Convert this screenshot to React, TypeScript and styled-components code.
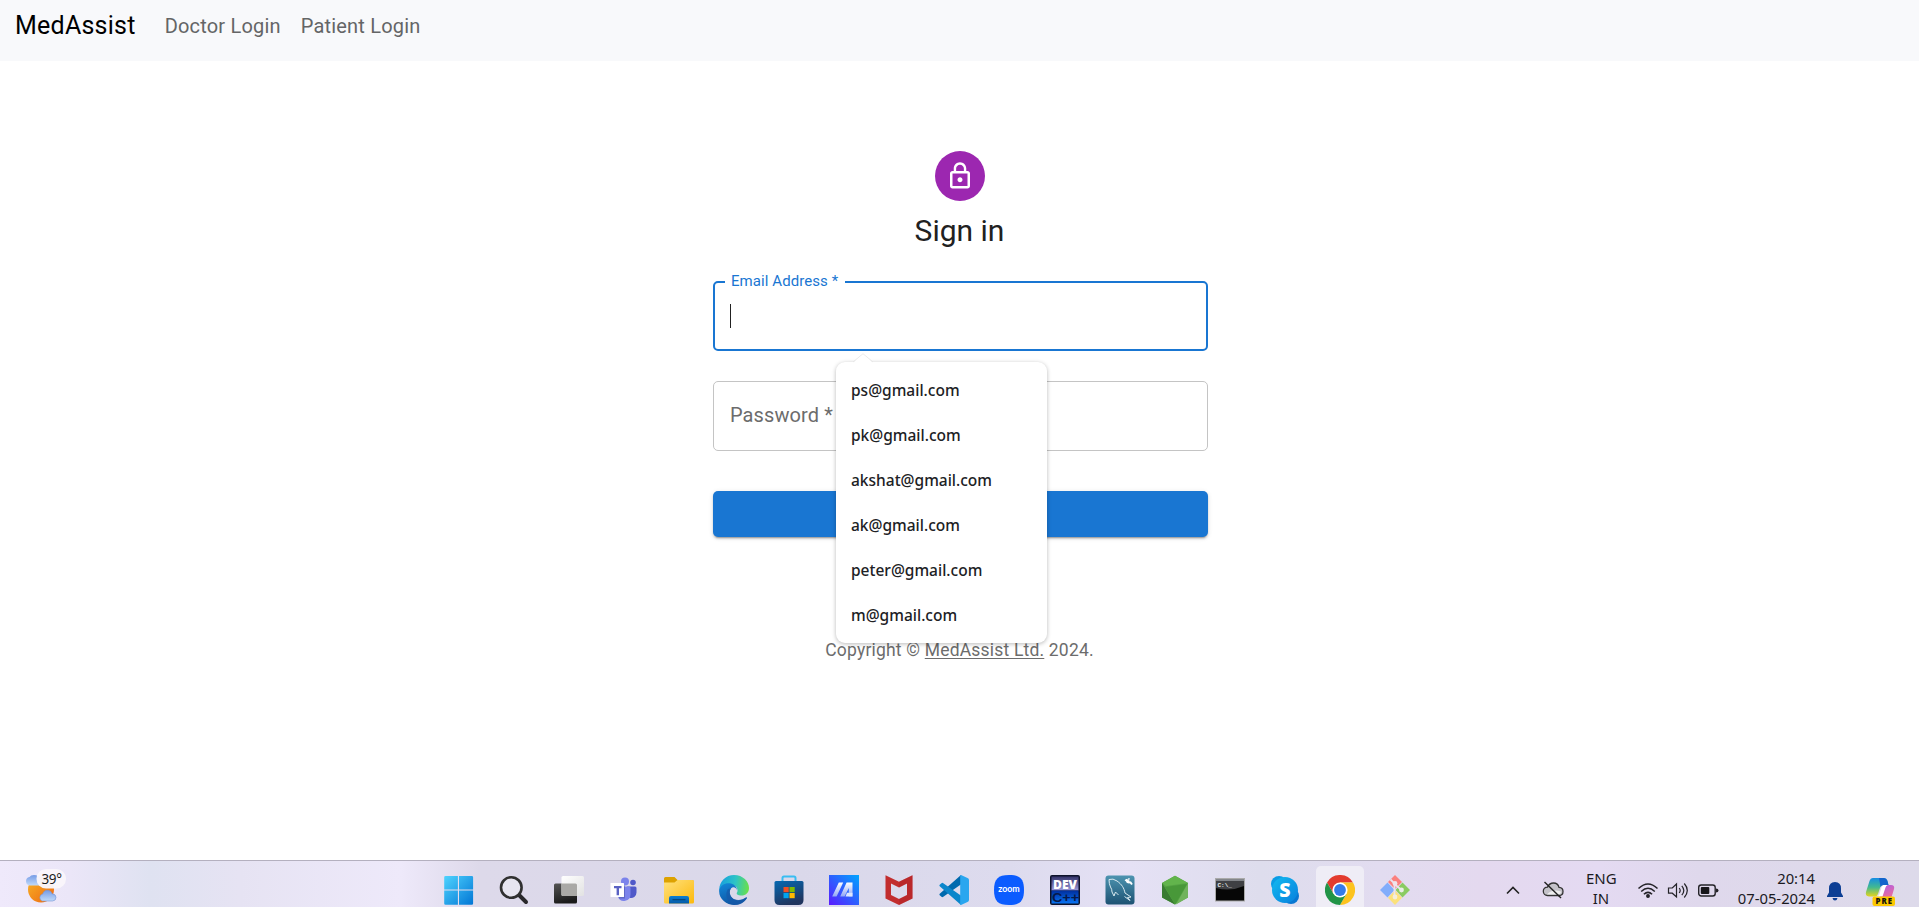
import React from "react";
import styled, { createGlobalStyle } from "styled-components";

const GlobalStyle = createGlobalStyle`
  *, *::before, *::after { box-sizing: border-box; }
  html, body { margin: 0; padding: 0; overflow: hidden; background: #fff; }
  body { font-family: Roboto, "Liberation Sans", sans-serif; }
`;

const Page = styled.div`
  display: flex;
  flex-direction: column;
  width: 100vw;
  height: 100vh;
  background: #fff;
`;

const Navbar = styled.nav`
  display: flex;
  align-items: flex-start;
  height: 61px;
  flex: none;
  padding: 7px 15px 0;
  background: #f8f9fb;
`;

const Brand = styled.a`
  font-size: 25px;
  line-height: 37px;
  letter-spacing: 0.24px;
  color: #000;
  margin-right: 29px;
`;

const NavItem = styled.a`
  font-size: 20px;
  line-height: 38px;
  letter-spacing: 0.19px;
  color: #646566;
  margin-right: 20px;
`;

const Main = styled.main`
  display: flex;
  flex-direction: column;
  align-items: center;
  flex: 1;
  min-height: 0;
  padding-top: 90px;
`;

const Avatar = styled.div`
  display: flex;
  align-items: center;
  justify-content: center;
  width: 50px;
  height: 50px;
  border-radius: 50%;
  background: #9c27b0;
`;

const Title = styled.h1`
  margin: 10px 0 0;
  font-size: 30px;
  font-weight: 400;
  line-height: 40px;
  color: #212121;
`;

const Form = styled.form`
  display: flex;
  flex-direction: column;
  width: 495px;
  margin: 30px 0 0 2px;
`;

const Field = styled.div<{ $active?: boolean }>`
  position: relative;
  display: flex;
  align-items: center;
  height: 70px;
  padding: ${(p) => (p.$active ? "0 15px" : "0 16px 2px")};
  margin-bottom: 30px;
  border: ${(p) => (p.$active ? "2px solid #1976d2" : "1px solid #c4c4c4")};
  border-radius: 5px;
`;

const FloatingLabel = styled.label`
  position: absolute;
  left: 10px;
  top: -12px;
  padding: 0 7px 0 6px;
  background: #fff;
  font-size: 15px;
  line-height: 20px;
  letter-spacing: 0.07px;
  color: #1976d2;
`;

const Placeholder = styled.label`
  font-size: 20px;
  letter-spacing: 0.1px;
  color: #6c6c6c;
`;

const Caret = styled.span`
  width: 1px;
  height: 24px;
  background: #212121;
`;

const SubmitButton = styled.button`
  height: 46px;
  margin: 10px 0 0;
  border: 0;
  border-radius: 5px;
  background: #1976d2;
  box-shadow: 0 3px 1px -2px rgba(0, 0, 0, 0.2), 0 2px 2px rgba(0, 0, 0, 0.14),
    0 1px 5px rgba(0, 0, 0, 0.12);
`;

const Suggestions = styled.div`
  position: absolute;
  z-index: 2;
  left: 121px;
  top: 79px;
  width: 211px;
  height: 281px;
  padding-top: 5px;
  border-radius: 9px;
  background: #fff;
  box-shadow: 0 1px 4px rgba(0, 0, 0, 0.28);
`;

const Pointer = styled.svg`
  position: absolute;
  left: 17px;
  top: -9px;
`;

const Suggestion = styled.div`
  display: flex;
  align-items: center;
  height: 45px;
  padding: 0 15px;
  font-family: "Noto Sans", "Open Sans", sans-serif;
  font-size: 15.5px;
  font-weight: 500;
  color: #202124;
`;

const Copyright = styled.p`
  margin: 101px 0 0;
  font-size: 17.5px;
  line-height: 25px;
  letter-spacing: 0.19px;
  color: #6c6c6c;

  a {
    text-decoration: underline;
    text-underline-offset: 2px;
    text-decoration-thickness: 1px;
  }
`;

const Taskbar = styled.footer`
  display: flex;
  height: 47px;
  flex: none;
  border-top: 1px solid #b4b0bf;
  overflow: hidden;
  background: linear-gradient(
    90deg,
    #efe9fb 0,
    #ebe6f8 70px,
    #dfe2f1 150px,
    #e6e3f3 240px,
    #eee9fa 400px,
    #ddd9ea 480px,
    #dad8ea 800px,
    #dddbee 1010px,
    #e5e1f5 1130px,
    #dedded 1260px,
    #e2dcf0 1380px,
    #e4d9ef 1480px,
    #e4daf2 1600px,
    #dfd8ec 1700px,
    #dddaea 1919px
  );
`;

const Weather = styled.div`
  display: flex;
  width: 430px;
  padding: 7px 0 0 25px;
`;

const Apps = styled.div`
  display: flex;
  width: 990px;
`;

const AppCell = styled.div<{ $active?: boolean }>`
  display: flex;
  justify-content: center;
  width: 48px;
  height: 50px;
  margin: 5px 2.6px 0 4.5px;
  padding-top: 9px;
  border-radius: 5px;
  flex: none;
  background: ${(p) => (p.$active ? "#efedf6" : "transparent")};
`;

const Tray = styled.div`
  display: flex;
  flex: 1;
  align-items: flex-start;
  padding: 19px 0 0 84px;
  font-family: "Noto Sans", "Open Sans", sans-serif;
  color: #1b1a1f;
`;

const TrayIcon = styled.div<{ $w: number; $gap: number }>`
  display: flex;
  justify-content: center;
  flex: none;
  width: ${(p) => p.$w}px;
  height: 22px;
  margin-right: ${(p) => p.$gap}px;
`;

const TrayText = styled.div<{ $w: number; $gap: number; $align: string; $size: number }>`
  flex: none;
  width: ${(p) => p.$w}px;
  margin: -11px ${(p) => p.$gap}px 0 0;
  text-align: ${(p) => p.$align};
  font-size: ${(p) => p.$size}px;
  line-height: 19.5px;
  white-space: nowrap;
`;

const Copilot = styled.div`
  margin-top: -3px;
`;

const Icon = ({ children }: { children: React.ReactNode }) => (
  <svg width="30" height="30" viewBox="0 0 30 30">
    {children}
  </svg>
);

const Grad = ({ id, a, b, d = "0,0,1,1" }: { id: string; a: string; b: string; d?: string }) => {
  const [x1, y1, x2, y2] = d.split(",");
  return (
    <linearGradient id={id} x1={x1} y1={y1} x2={x2} y2={y2}>
      <stop stopColor={a} />
      <stop offset="1" stopColor={b} />
    </linearGradient>
  );
};

const Windows = () => (
  <Icon>
    <defs>
      <linearGradient id="win" x1="0" y1="0" x2="30" y2="30" gradientUnits="userSpaceOnUse">
        <stop stopColor="#50d5ff" />
        <stop offset="1" stopColor="#0074d4" />
      </linearGradient>
    </defs>
    <path
      fill="url(#win)"
      d="M1.500 1h12.400v13.600H.2V2.200Q.2 1 1.500 1ZM15 1h12.800q1.300 0 1.300 1.200v12.400H15ZM.2 15.600h13.700v14.200H1.500Q.2 29.800.2 28.500ZM15 15.600h14.100v12.900q0 1.300-1.300 1.300H15Z"
    />
  </Icon>
);

const Search = () => (
  <Icon>
    <path d="M20.500 20.500 27 27" stroke="#29282b" strokeWidth="4" strokeLinecap="round" />
    <circle cx="12.300" cy="12.500" r="10.300" fill="#e7e5f0" stroke="#303030" strokeWidth="2.600" />
  </Icon>
);

const TaskView = () => (
  <Icon>
    <defs>
      <Grad id="tvd" a="#555" b="#1b1b1b" d="0,0,0.3,1" />
      <Grad id="tvl" a="#fff" b="#e2e2e2" />
    </defs>
    <rect x="0" y="8.500" width="23" height="20" rx="1.500" fill="url(#tvd)" />
    <rect x="7.500" y="1" width="22.500" height="20" rx="1.500" fill="url(#tvl)" />
    <path d="M7.500 8.500H21.500q1.500 0 1.500 1.500v11H9q-1.500 0-1.500-1.500Z" fill="#aaa9a6" />
  </Icon>
);

const Teams = () => (
  <Icon>
    <circle cx="24" cy="7.500" r="2.800" fill="#5059c9" />
    <circle cx="16" cy="6.500" r="4" fill="#7b83eb" />
    <path d="M18 11.500h8q1.500 0 1.500 1.500v4.500a5.500 5.500 0 0 1-7 5.300Z" fill="#5059c9" />
    <path d="M9 11.500h11q1.500 0 1.500 1.500v6.500a6.500 6.500 0 0 1-12.500 2.500Z" fill="#7b83eb" />
    <path d="M13 10.500h3v13h-6v-2Z" fill="#3f489e" opacity=".45" />
    <rect x="1.500" y="8" width="13.500" height="14" rx=".6" fill="#fff" />
    <path d="M5 11h7.500v2.300H10v7H7.600v-7H5Z" fill="#5a62c3" />
  </Icon>
);

const Explorer = () => (
  <Icon>
    <defs>
      <Grad id="fld" a="#ffe17c" b="#fcb90d" />
      <Grad id="flb" a="#0b7fd2" b="#0559a7" d="0,0,0,1" />
    </defs>
    <path d="M0 9V3.500Q0 2 1.500 2h9l3 3H28q2 0 2 2v6H0Z" fill="#dda200" />
    <path d="M0 7.500h10.500L13.500 5H28.500Q30 5 30 6.500v20.500q0 1.500-1.500 1.500h-27Q0 28.500 0 27Z" fill="url(#fld)" />
    <path d="M5 28.500v-5.500q0-2 2-2h16q2 0 2 2v5.500Z" fill="url(#flb)" />
    <path d="M8.500 24.700h13" stroke="#074377" strokeWidth="1.200" />
  </Icon>
);

const Edge = () => (
  <Icon>
    <defs>
      <linearGradient id="eg1" x1="2" y1="8" x2="30" y2="12" gradientUnits="userSpaceOnUse">
        <stop stopColor="#1aa3dc" />
        <stop offset=".5" stopColor="#2dc4c6" />
        <stop offset="1" stopColor="#6be048" />
      </linearGradient>
      <Grad id="eg2" a="#1389da" b="#0f55a3" d="0,0,0.4,1" />
    </defs>
    <path d="M15 0c9 0 15 6.500 15 13 0 5-4 8-8.500 7.500-3-.3-4.500-1.500-3.500-3 1-1.300 1-6.500-4-7.300C8 9.500 2 12 .3 16.500-.5 7 6.500 0 15 0Z" fill="url(#eg1)" />
    <path d="M.2 15.500C1.500 9.500 7 7.300 12 8.500c4 1 6 4 5.800 6.500-.5-2-2.500-3.500-4.500-2.500-4.500 2.500-2.800 11 4 12.500 3.200.7 7-.5 9.700-2.500.6-.4 1.200.1.800.8C25.500 27.500 20 30 15.500 30 7 30-.5 23.500.2 15.500Z" fill="url(#eg2)" />
    <path d="M9 14c-4 6-.5 14 6 15.900 5 .6 10-2.200 12.500-6.200.5-.8-.2-1.400-.9-.9C20 27 11 25 10.800 17.500Q10.700 15 12 13.300Z" fill="#1759a8" opacity=".7" />
  </Icon>
);

const Store = () => (
  <Icon>
    <defs>
      <Grad id="sto" a="#0669b2" b="#20355f" d="0,0,0.4,1" />
    </defs>
    <path d="M8.500 7V3q0-1.500 1.500-1.500h10q1.500 0 1.500 1.500v4" fill="none" stroke="#39bdf2" strokeWidth="2" />
    <path d="M2 6h26q1.500 0 1.500 1.500V25q0 5-5 5h-19q-5 0-5-5V7.500Q.5 6 2 6Z" fill="url(#sto)" />
    <path d="M9.500 12h5.200v5.200H9.500Z" fill="#f25022" />
    <path d="M15.500 12h5.200v5.200h-5.200Z" fill="#7fba00" />
    <path d="M9.500 18h5.200v5.200H9.500Z" fill="#00a4ef" />
    <path d="M15.500 18h5.200v5.200h-5.200Z" fill="#ffb900" />
  </Icon>
);

const MyAsus = () => (
  <Icon>
    <defs>
      <Grad id="asu" a="#5a19ff" b="#00a5ff" d="0,1,1,0" />
      <Grad id="asl" a="#fff" b="#91a7f5" d="0,0,0,1" />
    </defs>
    <path d="M0 0h30v30H0Z" fill="url(#asu)" />
    <path d="M9.800 7.500h4.400L7.600 21.500H3.200Z" fill="url(#asl)" />
    <path d="M17.600 7.500h5.900v14h-3.700V13l-4.200 8.500h-4.400Z" fill="url(#asl)" />
    <path d="M18 17.800h5.500v3.700H16.500Z" fill="#dce6ff" />
  </Icon>
);

const McAfee = () => (
  <Icon>
    <path d="m1.500.3 13.500 6.500L28.500.3v23.200L15 30 1.500 23.500ZM7 8.500v11.500l8 4 8-4V8.500l-8 4Z" fill="#c22d2e" fillRule="evenodd" />
    <path d="m15 6.800 13.500-6.500v23.200L15 30v-6l8-4V8.500l-8 4Z" fill="#a81f24" opacity=".3" />
  </Icon>
);

const VsCode = () => (
  <Icon>
    <path d="M22 0 1 18.500q-1.200 1 0 2l1.500 1.300q.8.700 1.800 0L22.500 9Z" fill="#0069ae" />
    <path d="M22 30 1 11.500q-1.200-1 0-2l1.500-1.300q.8-.7 1.800 0L22.500 21Z" fill="#0b86cb" />
    <path d="m22 0 6.500 3Q30 3.700 30 5v20q0 1.300-1.500 2L22 30q-.8-.5-.8-1.500v-27Q21.200.4 22 0Z" fill="#2aa6ef" />
  </Icon>
);

const Zoom = () => (
  <Icon>
    <path d="M15 0C26 0 30 4 30 15S26 30 15 30 0 26 0 15 4 0 15 0Z" fill="#0b5cff" />
    <text x="15" y="17.300" textAnchor="middle" fontFamily="Lato, sans-serif" fontWeight="700" fontSize="8.500" textLength="21.500" lengthAdjust="spacingAndGlyphs" fill="#fff">zoom</text>
  </Icon>
);

const DevCpp = () => (
  <Icon>
    <defs>
      <Grad id="dvt" a="#34346a" b="#9999da" d="0,0,0,1" />
      <Grad id="dvb" a="#002e9d" b="#0873f4" d="0,0,0,1" />
    </defs>
    <rect width="30" height="30" rx="2" fill="#0e132b" />
    <path d="M1.500 1.500h27v14h-27Z" fill="url(#dvt)" />
    <path d="M1.500 15.500h27v13h-27Z" fill="url(#dvb)" />
    <text x="15" y="13.500" textAnchor="middle" fontFamily="Open Sans, sans-serif" fontWeight="800" fontSize="11.500" textLength="24" lengthAdjust="spacingAndGlyphs" fill="#fff">DEV</text>
    <text x="15.500" y="26.500" textAnchor="middle" fontFamily="Liberation Sans, sans-serif" fontWeight="700" fontSize="13" textLength="27" lengthAdjust="spacingAndGlyphs" fill="#06194b">C++</text>
  </Icon>
);

const MySql = () => (
  <Icon>
    <defs>
      <Grad id="sql" a="#4d94b0" b="#1d5273" d="0,0,0,1" />
    </defs>
    <rect x=".5" y=".5" width="29" height="29" rx="3" fill="url(#sql)" />
    <path d="M4 4.500Q8 3 12 6c5 3.500 7 7 8 12l6 4-3.500.5 2.500 3-5.500-4M4 4.500Q4 9 5.500 12q1.500 2 1.500 5l2 4 1.500-4 3 3" fill="none" stroke="#d9eaf0" strokeWidth="1" />
    <path d="m21.500 4 1 3 3 .5 1.500 2" fill="none" stroke="#fff" strokeWidth="2" />
    <path d="m20 5 3.500 2.500L24 3" fill="none" stroke="#fff" strokeWidth="1.200" />
  </Icon>
);

const NodeHex = () => (
  <Icon>
    <path d="M15 .7 28 8v14.500L15 29.500 2 22.500V8Z" fill="#55a344" />
    <path d="m15 .7 13 7.300-22 3-4-3Z" fill="#62b44c" />
    <path d="m28 8-12 21.500L28 22.500Z" fill="#70b35c" />
    <path d="M2 8 15 29.500 2 22.500Z" fill="#397c32" />
    <path d="m5 12 22-3-12 20.500Z" fill="#489839" />
  </Icon>
);

const Cmd = () => (
  <Icon>
    <rect x=".5" y="3.500" width="29" height="22.500" fill="#060606" stroke="#aaa" />
    <path d="M1 4h28v7Q15 17 1 13Z" fill="#3f4044" />
    <path d="M1 4h28v2H1Z" fill="#83868b" />
    <text x="2.500" y="11.500" fontFamily="Liberation Mono, monospace" fontWeight="700" fontSize="6" fill="#f0f0f0">C:\_</text>
  </Icon>
);

const Skype = () => (
  <Icon>
    <defs>
      <Grad id="sky" a="#12bbf0" b="#087fdd" />
    </defs>
    <circle cx="9" cy="9" r="8" fill="#0a9ce5" />
    <circle cx="21" cy="21" r="8" fill="#0877d2" />
    <circle cx="15" cy="15" r="13" fill="url(#sky)" />
    <text x="15" y="22" textAnchor="middle" fontFamily="Open Sans, sans-serif" fontWeight="800" fontSize="19.500" fill="#fff">S</text>
  </Icon>
);

const Chrome = () => (
  <Icon>
    <path d="M2 7.500A15 15 0 0 1 28 7.500H15L8.500 18.800Z" fill="#e33b2e" />
    <path d="M28 7.500A15 15 0 0 1 15 30l6.500-11.200q2-6-6.500-11.300Z" fill="#fcc31e" />
    <path d="M2 7.500A15 15 0 0 0 15 30l6.500-11.200H8.500Z" fill="#229447" />
    <circle cx="15" cy="15" r="7.600" fill="#fff" />
    <circle cx="15" cy="15" r="5.900" fill="#347be9" />
  </Icon>
);

const Git = () => (
  <Icon>
    <path d="m15 0 7 7-7 7-7-7Z" fill="#fb807e" />
    <path d="m7.500 7.500 7 7.500-7 7.500L0 15Z" fill="#82adfb" />
    <path d="m22.500 7.500 7.500 7.500-7.500 7.500-7-7.500Z" fill="#8acb62" />
    <path d="m15 15.500 7 7.200L15 30l-7-7.300Z" fill="#fbe17c" />
    <path d="m10.500 4.500 4 4v13.500M15 9.500l6.500 5.500" stroke="#e9e3ef" strokeWidth="1.800" fill="none" />
    <circle cx="15" cy="8.500" r="2.400" fill="#f0e4eb" />
    <circle cx="21.500" cy="15" r="2.400" fill="#e9eee7" />
    <circle cx="15" cy="22" r="2.400" fill="#f3eddd" />
  </Icon>
);

const apps = [
  Windows, Search, TaskView, Teams, Explorer, Edge, Store, MyAsus, McAfee,
  VsCode, Zoom, DevCpp, MySql, NodeHex, Cmd, Skype, Chrome, Git,
];

const emails = [
  "ps@gmail.com",
  "pk@gmail.com",
  "akshat@gmail.com",
  "ak@gmail.com",
  "peter@gmail.com",
  "m@gmail.com",
];

const WeatherIcon = () => (
  <svg width="44" height="38" viewBox="0 0 44 38">
    <defs>
      <Grad id="sun" a="#f8b526" b="#ed6612" />
      <Grad id="cld" a="#759be6" b="#c0dafa" d="0,0,0,1" />
    </defs>
    <circle cx="16" cy="21.500" r="13" fill="url(#sun)" />
    <path d="M5 17.500a4.300 4.300 0 0 1-.5-8.500Q5.500 7 9 7q5 0 6.500 5v5.500Z" fill="url(#cld)" />
    <path d="M17.500 33a3.600 3.600 0 0 1 .2-7q1.300-4 5-3.700 3.500.3 4.300 3.500 4 .2 4 3.600t-3.500 3.600Z" fill="url(#cld)" stroke="#7793d4" strokeWidth=".6" />
    <rect x="11.500" y="1" width="29.500" height="19.500" rx="9.500" fill="#f9f6fb" opacity=".96" />
    <text x="16.500" y="16" fontFamily="Noto Sans, sans-serif" fontSize="13.500" textLength="20.500" fill="#1c1c1c">39°</text>
  </svg>
);

const CopilotIcon = () => (
  <svg width="31" height="30" viewBox="0 0 31 30">
    <defs>
      <linearGradient id="cpl" x1="0" y1="0" x2="0" y2="1">
        <stop stopColor="#168de4" />
        <stop offset=".5" stopColor="#42b990" />
        <stop offset="1" stopColor="#e4d51c" />
      </linearGradient>
      <Grad id="cpr" a="#ab5ced" b="#f26f91" d="0,0,0.4,1" />
    </defs>
    <path d="M8 1h11q2.500 0 3.300 2.500L23.500 8h-5q-2.500 0-3.500 3l-2 6q-.8 2.500-3.500 2.500H4Q0 19 1 15L4.500 4Q5.500 1 8 1Z" fill="url(#cpl)" />
    <path d="M14 1h5q2.500 0 3.300 2.500L23.500 8h-5q-2 0-3 2Z" fill="#1464cc" />
    <path d="M21 8h5q4 0 3 4l-3 10q-1 3-4 3H9l4-4q2 0 3-3l2-7q.8-3 3-3Z" fill="url(#cpr)" />
    <path d="M18.500 8h4.200q-1.600.5-2.200 2.500L17.500 19.500h-5q1.500-.7 2-2.500l2-6.500q.6-2 2-2.500Z" fill="#fff" />
    <rect x="7.500" y="19.500" width="22.500" height="9.500" rx="2" fill="#fcc800" />
    <text x="18.800" y="27.300" textAnchor="middle" fontFamily="Open Sans, sans-serif" fontWeight="800" fontSize="7.800" textLength="16.500" fill="#17150b">PRE</text>
  </svg>
);

export default function App() {
  return (
    <Page>
      <GlobalStyle />
      <Navbar>
        <Brand>MedAssist</Brand>
        <NavItem>Doctor Login</NavItem>
        <NavItem>Patient Login</NavItem>
      </Navbar>
      <Main>
        <Avatar>
          <svg width="30" height="30" viewBox="0 0 24 24" fill="#fff">
            <path d="M12 17c1.100 0 2-.9 2-2s-.9-2-2-2-2 .9-2 2 .9 2 2 2zm6-9h-1V6c0-2.760-2.240-5-5-5S7 3.240 7 6v2H6c-1.100 0-2 .9-2 2v10c0 1.100.9 2 2 2h12c1.100 0 2-.9 2-2V10c0-1.100-.9-2-2-2zM8.900 6c0-1.710 1.390-3.100 3.100-3.100s3.100 1.390 3.100 3.100v2H8.900V6zM18 20H6V10h12v10z" />
          </svg>
        </Avatar>
        <Title>Sign in</Title>
        <Form>
          <Field $active>
            <FloatingLabel>Email Address *</FloatingLabel>
            <Caret />
            <Suggestions>
              <Pointer width="20" height="10" viewBox="0 0 20 10">
                <path d="M0 10 10 .7 20 10Z" fill="#fff" />
                <path d="M0 9 10 .7 20 9" fill="none" stroke="#e4e4e4" strokeWidth=".8" />
              </Pointer>
              {emails.map((email) => (
                <Suggestion key={email}>{email}</Suggestion>
              ))}
            </Suggestions>
          </Field>
          <Field>
            <Placeholder>Password *</Placeholder>
          </Field>
          <SubmitButton type="button" />
        </Form>
        <Copyright>
          Copyright © <a>MedAssist Ltd.</a> 2024.
        </Copyright>
      </Main>
      <Taskbar>
        <Weather>
          <WeatherIcon />
        </Weather>
        <Apps>
          {apps.map((AppIcon, i) => (
            <AppCell key={i} $active={AppIcon === Chrome}>
              <AppIcon />
            </AppCell>
          ))}
        </Apps>
        <Tray>
          <TrayIcon $w={18} $gap={20}>
            <svg width="16" height="22" viewBox="0 0 16 22">
              <path d="m2 13.500 6-6 6 6" fill="none" stroke="#222" strokeWidth="1.600" />
            </svg>
          </TrayIcon>
          <TrayIcon $w={22} $gap={22}>
            <svg width="22" height="22" viewBox="0 0 22 22">
              <path d="M5.500 15.500a4.200 4.200 0 0 1 0-8.400Q7.500 3 11.500 3q4.500 0 5.500 4.300 4 .2 4 4.200 0 4-4 4Z" fill="#c4c2c9" stroke="#333" strokeWidth="1.300" />
              <path d="M5 14.500q5-6 14-3 0 3-3 3Z" fill="#eee" />
              <path d="m2.500 2 16.500 16" stroke="#222" strokeWidth="1.400" />
            </svg>
          </TrayIcon>
          <TrayText $w={30} $gap={21} $align="center" $size={15}>
            ENG
            <br />
            IN
          </TrayText>
          <TrayIcon $w={22} $gap={8}>
            <svg width="22" height="22" viewBox="0 0 22 22" fill="none" stroke="#242328" strokeWidth="1.500">
              <path d="M1.500 8.500q9.500-9 19 0M4.200 11.500q6.800-6.400 13.600 0M6.900 14.300q4.100-3.900 8.200 0" />
              <circle cx="11" cy="16" r="1.200" fill="#242328" />
            </svg>
          </TrayIcon>
          <TrayIcon $w={22} $gap={8}>
            <svg width="22" height="22" viewBox="0 0 22 22" fill="none" stroke="#242328" strokeWidth="1.200">
              <path d="M1.500 8h3.800L9.500 4v13l-4.200-3.800H1.500ZM12.200 8q2 2.500 0 5M14.800 5.800q4 4.700 0 9.400M17.300 3.500q6 7 0 14" />
            </svg>
          </TrayIcon>
          <TrayIcon $w={22} $gap={15}>
            <svg width="22" height="22" viewBox="0 0 22 22">
              <rect x="1.700" y="5" width="16.500" height="11" rx="2.500" fill="none" stroke="#242328" strokeWidth="1.400" />
              <rect x="3.800" y="7.100" width="8.500" height="6.800" rx="1" fill="#17161a" />
              <path d="M19 8.500q2.500 0 2.500 2t-2.500 2Z" fill="#242328" />
            </svg>
          </TrayIcon>
          <TrayText $w={81} $gap={10} $align="right" $size={14.8}>
            20:14
            <br />
            07-05-2024
          </TrayText>
          <TrayIcon $w={20} $gap={20}>
            <svg width="18" height="22" viewBox="0 0 18 22">
              <path d="M3 8.500Q3 2 9 2t6 6.500v4l2 3.500v1H1v-1l2-3.500ZM6.500 18h5q-.5 2.500-2.500 2.500T6.500 18Z" fill="#0c3e94" />
            </svg>
          </TrayIcon>
          <Copilot>
            <CopilotIcon />
          </Copilot>
        </Tray>
      </Taskbar>
    </Page>
  );
}
